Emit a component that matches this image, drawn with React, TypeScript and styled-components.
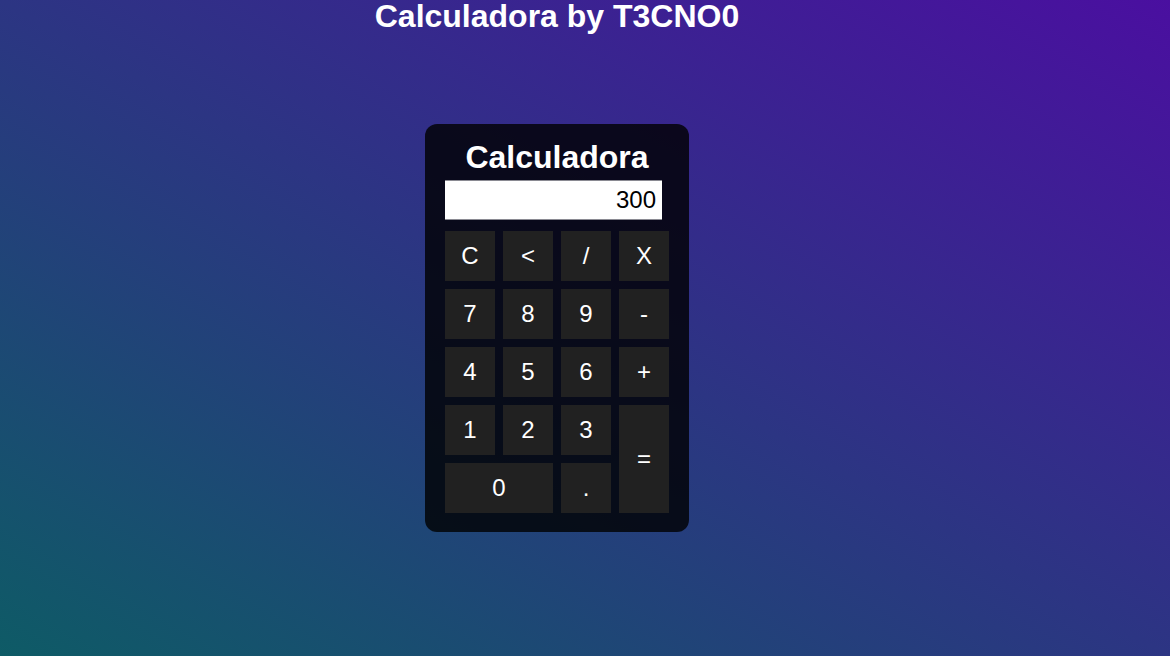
import React from "react";
import styled, { createGlobalStyle } from "styled-components";

const GlobalStyle = createGlobalStyle`
  html, body {
    margin: 0;
    padding: 0;
  }
  body {
    font-family: "Liberation Sans", Arial, sans-serif;
    min-height: 100vh;
    background: linear-gradient(to top right, #0e5b66 0%, #4a0fa0 100%);
    background-attachment: fixed;
  }
`;

const Page = styled.main`
  min-height: 100vh;
  box-sizing: border-box;
  padding-right: 56px;
  display: flex;
  flex-direction: column;
  align-items: center;
`;

const Title = styled.h1`
  margin: 0;
  font-size: 32px;
  line-height: 32px;
  font-weight: 700;
  color: #ffffff;
`;

const Card = styled.section`
  margin-top: 92px;
  box-sizing: border-box;
  width: 264px;
  padding: 17px 20px 19px;
  border-radius: 12px;
  background: rgba(0, 0, 0, 0.8);
  display: flex;
  flex-direction: column;
  align-items: stretch;
`;

const CardTitle = styled.h2`
  margin: 0;
  font-size: 32px;
  line-height: 32px;
  font-weight: 700;
  color: #ffffff;
  text-align: center;
`;

const Display = styled.div`
  margin-top: 7px;
  box-sizing: border-box;
  width: 217px;
  height: 40px;
  background: #ffffff;
  border-top: 1px solid #8a8a92;
  border-bottom: 1px solid #8a8a92;
  padding-right: 6px;
  display: flex;
  align-items: center;
  justify-content: flex-end;
  font-size: 24px;
  color: #000000;
`;

const Keys = styled.div`
  margin-top: 11px;
  display: grid;
  grid-template-columns: repeat(4, 50px);
  grid-auto-rows: 50px;
  gap: 8px;
`;

const Key = styled.button<{ $wide?: boolean; $tall?: boolean }>`
  border: none;
  padding: 0;
  margin: 0;
  background: #212121;
  color: #ffffff;
  font-family: "Liberation Sans", Arial, sans-serif;
  font-size: 24px;
  display: flex;
  align-items: center;
  justify-content: center;
  cursor: pointer;
  grid-column: ${(p) => (p.$wide ? "span 2" : "auto")};
  grid-row: ${(p) => (p.$tall ? "span 2" : "auto")};
`;

const keys: { label: string; wide?: boolean; tall?: boolean }[] = [
  { label: "C" },
  { label: "<" },
  { label: "/" },
  { label: "X" },
  { label: "7" },
  { label: "8" },
  { label: "9" },
  { label: "-" },
  { label: "4" },
  { label: "5" },
  { label: "6" },
  { label: "+" },
  { label: "1" },
  { label: "2" },
  { label: "3" },
  { label: "=", tall: true },
  { label: "0", wide: true },
  { label: "." },
];

export default function App() {
  return (
    <>
      <GlobalStyle />
      <Page>
        <Title>Calculadora by T3CNO0</Title>
        <Card>
          <CardTitle>Calculadora</CardTitle>
          <Display>300</Display>
          <Keys>
            {keys.map((k) => (
              <Key key={k.label} $wide={k.wide} $tall={k.tall}>
                {k.label}
              </Key>
            ))}
          </Keys>
        </Card>
      </Page>
    </>
  );
}
